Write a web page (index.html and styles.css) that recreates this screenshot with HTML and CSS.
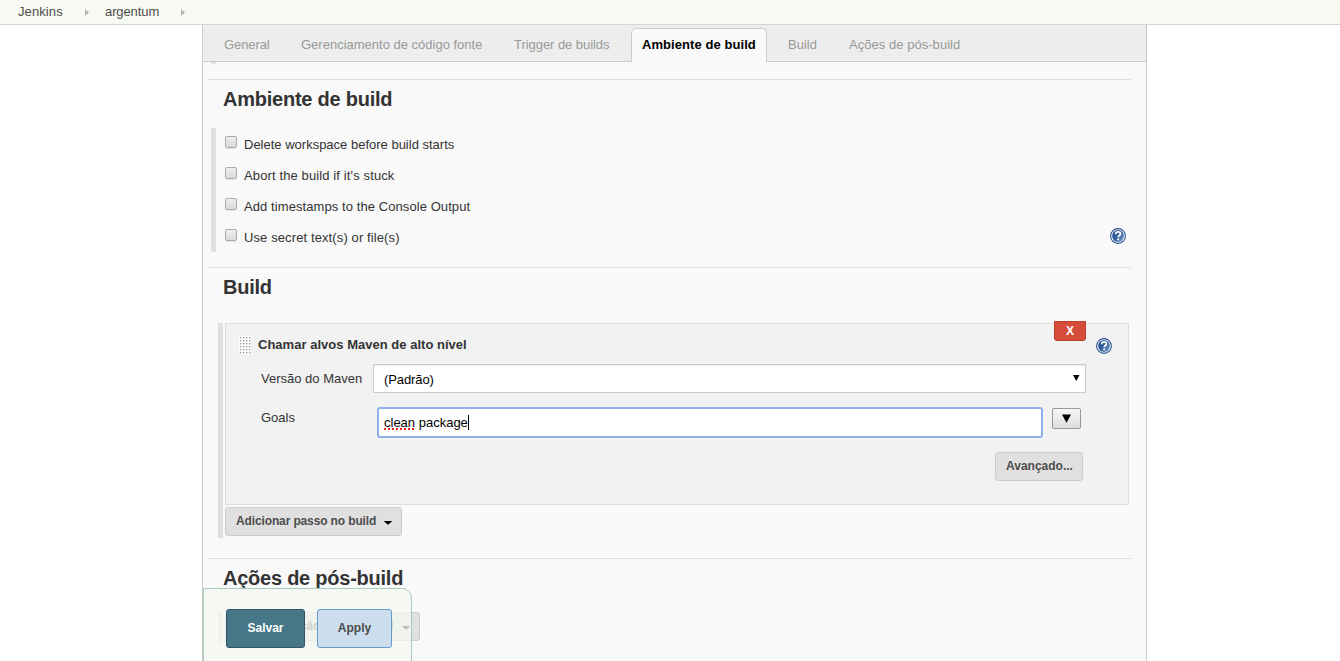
FILE: index.html
```html
<!DOCTYPE html>
<html lang="pt-BR">
<head>
<meta charset="utf-8">
<title>argentum Config [Jenkins]</title>
<link rel="stylesheet" href="styles.css">
</head>
<body>
<svg class="defs" aria-hidden="true">
  <defs>
    <linearGradient id="blue" x1="0" y1="0" x2="1" y2="1"><stop offset="0" stop-color="#1f4484"/><stop offset=".5" stop-color="#355f9f"/><stop offset="1" stop-color="#7ea1d0"/></linearGradient>
    <symbol id="help" viewBox="0 0 16 16">
      <circle cx="8" cy="8" r="7.4" fill="#fff" stroke="#2b5290" stroke-width="1.1"/>
      <circle cx="8" cy="8" r="5.9" fill="url(#blue)"/>
      <path d="M5.7 6.2C5.7 4.6 6.7 3.9 8.1 3.9S10.4 4.7 10.4 5.9C10.4 7.4 8.2 7.5 8.2 9.3M8.2 10.6V12.2" fill="none" stroke="#fff" stroke-width="1.8"/>
    </symbol>
    <pattern id="dots" width="3" height="3" patternUnits="userSpaceOnUse"><path d="M1 1h1v1H1z" fill="#999"/><path d="M2 1h1v1H2zM1 2h1v1H1z" fill="#d4d4d4"/></pattern>
  </defs>
</svg>
<header class="crumbs">
  <span class="crumb-home">Jenkins</span><i class="chevron"></i>
  <span class="crumb-job">argentum</span><i class="chevron"></i>
</header>
<main class="panel">
  <nav class="tabs">
    <span class="tab tab-general">General</span>
    <span class="tab tab-scm">Gerenciamento de código fonte</span>
    <span class="tab tab-trigger">Trigger de builds</span>
    <span class="tab active">Ambiente de build</span>
    <span class="tab tab-build">Build</span>
    <span class="tab tab-post">Ações de pós-build</span>
  </nav>
  <div class="previous"></div>
  <section class="section environment">
    <h2 class="title-env">Ambiente de build</h2>
    <div class="checks">
      <label class="check"><span class="box"></span><span class="label l1">Delete workspace before build starts</span></label>
      <label class="check"><span class="box"></span><span class="label l2">Abort the build if it's stuck</span></label>
      <label class="check"><span class="box"></span><span class="label l3">Add timestamps to the Console Output</span></label>
      <label class="check"><span class="box"></span><span class="label l4">Use secret text(s) or file(s)</span><svg class="help"><use href="#help"/></svg></label>
    </div>
  </section>
  <section class="section build">
    <h2 class="title-build">Build</h2>
    <div class="steps">
      <div class="step">
        <button class="delete">X</button>
        <div class="step-head">
          <svg class="handle"><rect width="12" height="18" fill="#fff"/><rect width="12" height="18" fill="url(#dots)"/></svg>
          <b class="step-title">Chamar alvos Maven de alto nível</b>
          <svg class="help"><use href="#help"/></svg>
        </div>
        <div class="field version">
          <span class="field-name">Versão do Maven</span>
          <div class="select"><span>(Padrão)</span><svg class="arrow" viewBox="0 0 7 7"><path d="M0 1H6.5L3.25 7Z"/></svg></div>
        </div>
        <div class="field goals">
          <span class="field-name">Goals</span>
          <div class="input"><span class="misspelt">clean</span>&nbsp;package<i class="caret"></i></div>
          <button class="expand"><svg viewBox="0 0 9 9"><path d="M0 .5H9L4.5 8.8Z"/></svg></button>
        </div>
        <div class="advanced"><button class="button">Avançado...</button></div>
      </div>
      <button class="button add">Adicionar passo no build<i class="down"></i></button>
    </div>
  </section>
  <section class="section post">
    <h2 class="title-post">Ações de pós-build</h2>
    <div class="steps"><button class="button add">Adicionar ação de pós-build<i class="down"></i></button></div>
  </section>
  <footer class="save-bar">
    <button class="save">Salvar</button>
    <button class="apply">Apply</button>
  </footer>
</main>
</body>
</html>
```
FILE: styles.css
```css
* { box-sizing: border-box; }
body { margin: 0; height: 661px; overflow: hidden; background: #fff; color: #333; font: 13px/18px "Liberation Sans", Arial, sans-serif; }
button { margin: 0; padding: 0; font: bold 12px/18px "Liberation Sans", Arial, sans-serif; }
.defs { position: absolute; width: 0; height: 0; }
.crumbs { display: flex; height: 25px; padding: 3px 0 0 18px; background: #f6faf2; border-bottom: 1px solid #d3d7cf; color: #4d4d4d; }
.crumb-home { width: 67px; letter-spacing: .1px; }
.crumb-job { width: 76px; margin-left: 16px; letter-spacing: -.1px; }
.chevron { width: 4px; height: 7px; margin-top: 6px; background: #b3b3b3; clip-path: polygon(0 0, 100% 50%, 0 100%); }
.panel { position: relative; width: 945px; height: 636px; margin-left: 202px; overflow: hidden; background: #f9f9f9; border: solid #ccc; border-width: 0 1px; }
.tabs { display: flex; height: 37px; padding: 3px 0 0 10px; background: #ededed; border-bottom: 1px solid #ccc; }
.tab { flex: none; height: 34px; padding: 8px 0 0 11px; color: #999; white-space: nowrap; }
.tab-general { width: 77px; letter-spacing: -.1px; }
.tab-scm { width: 213px; }
.tab-trigger { width: 128px; letter-spacing: -.05px; }
.active { width: 136px; padding-left: 10px; padding-top: 7px; background: #f9f9f9; border: 1px solid #ccc; border-bottom: 0; border-radius: 5px 5px 0 0; color: #000; font-weight: bold; letter-spacing: .07px; }
.tab-build { width: 71px; padding-left: 21px; }
.tab-post { letter-spacing: .04px; }
.previous { width: 5px; height: 2px; margin-left: 8px; background: #e0e0e0; }
.section { width: 923px; margin-left: 5px; border-top: 1px solid #ddd; }
.environment { height: 188px; margin-top: 15px; }
.build { height: 291px; }
h2 { margin: 0; padding: 7px 0 0 15px; height: 48px; font: bold 20px/24px "Liberation Sans", Arial, sans-serif; letter-spacing: -.24px; }
.checks { margin-left: 3px; height: 124px; border-left: 5px solid #e0e0e0; }
.check { display: flex; height: 31px; padding: 8px 5px 0 9px; }
.check .help { margin-top: -1px; }
.box { width: 12px; height: 12px; border: 1px solid #acacac; border-radius: 2px; background: linear-gradient(#eee, #dadada); box-shadow: 0 1px 1px #e4e4e4; }
.label { margin-left: 7px; }
.l2 { letter-spacing: .12px; }
.l3 { letter-spacing: .08px; }
.l4 { letter-spacing: .11px; }
.help { width: 16px; height: 16px; margin-left: auto; }
.steps { margin-left: 10px; height: 215px; border-left: 5px solid #e0e0e0; padding-left: 2px; }
.build h2 { height: 55px; }
.step { position: relative; width: 904px; height: 182px; margin-bottom: 2px; padding: 12px 16px 0 13px; background: #f2f2f2; border: 1px solid #ddd; }
.delete { position: absolute; top: -3px; right: 42px; width: 32px; height: 20px; color: #fff; background: #d54c3b; border: 1px solid #bd3c2b; border-radius: 0 0 3px 3px; }
.step-head { display: flex; height: 28px; }
.handle { width: 12px; height: 18px; }
.step-title { margin-left: 7px; letter-spacing: .02px; }
.step-head .help { margin-top: 2px; }
.field { display: flex; margin-left: 22px; }
.field-name { padding-top: 6px; }
.version .field-name { width: 112px; }
.select { display: flex; justify-content: space-between; width: 713px; height: 29px; padding: 6px 5px 0 10px; border: 1px solid #ccc; background: #fff; box-shadow: inset 0 1px 2px #eee; color: #000; letter-spacing: -.1px; }
.arrow { width: 7px; height: 7px; margin-top: 3px; }
.goals { margin-top: 14px; }
.goals .field-name { width: 116px; padding-top: 2px; }
.input { display: flex; width: 666px; height: 31px; padding: 5px; border: 2px solid #8fb0ec; border-radius: 3px; background: #fff; color: #000; }
.misspelt { text-decoration: underline dotted #e22 2px; text-underline-offset: 1px; text-decoration-skip-ink: none; }
.caret { width: 1px; height: 15px; margin-top: 1px; background: #000; }
.expand { display: grid; place-items: center; width: 29px; height: 21px; margin: 1px 0 0 9px; border: 1px solid #999; border-radius: 2px; background: linear-gradient(#f7f7f7, #ddd); }
.expand svg { width: 9px; height: 9px; }
.button { height: 29px; padding: 0 10px 2px; color: #4d4d4d; background: #e0e0e0; border: 1px solid #ccc; border-radius: 3px; white-space: nowrap; }
.advanced { display: flex; justify-content: flex-end; padding: 14px 29px 0 0; }
.advanced .button { width: 88px; }
.add { display: flex; align-items: center; justify-content: space-between; width: 177px; padding-right: 9px; letter-spacing: -.13px; }
.down { width: 8px; height: 4px; margin-top: 4px; background: #000; clip-path: polygon(0 0, 100% 0, 100% 20%, 56% 100%, 44% 100%, 0 20%); }
.post h2 { height: 53px; }
.post .steps { height: 31px; }
.post .add { width: 195px; }
.save-bar { position: absolute; left: 0; top: 563px; display: flex; width: 209px; height: 80px; padding: 20px 0 0 22px; gap: 12px; background: rgba(244, 248, 240, .76); border: 1px solid #a8cbb9; border-radius: 0 10px 0 0; }
.save, .apply { height: 39px; padding-bottom: 2px; border-radius: 3px; }
.save { width: 79px; color: #fff; background: #457788; border: 1px solid #315565; }
.apply { width: 75px; color: #4d4d4d; background: #ccdded; border: 1px solid #6699cc; }
```
